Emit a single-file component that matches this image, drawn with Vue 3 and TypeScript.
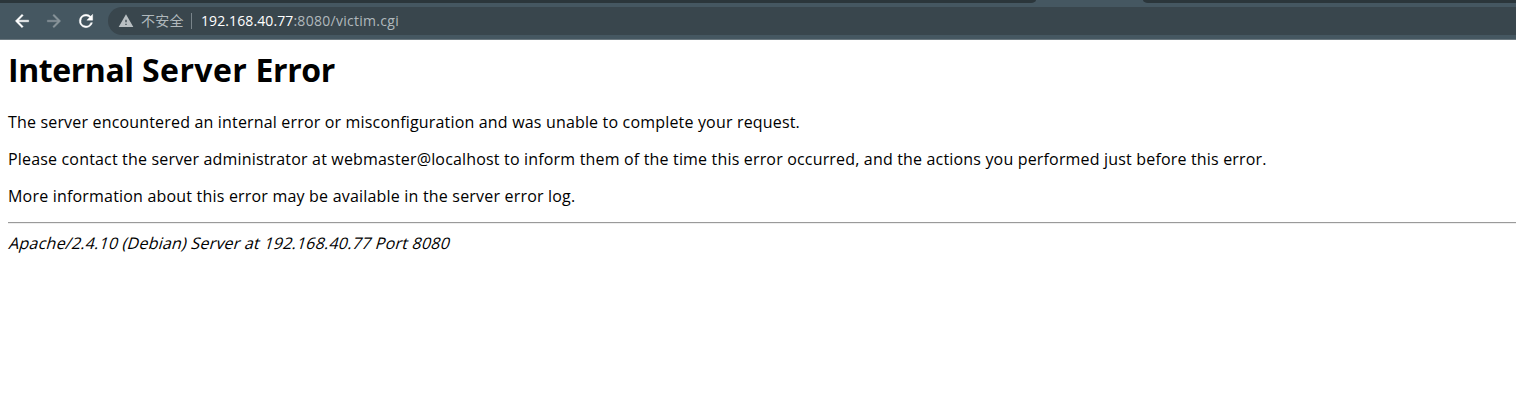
<script setup lang="ts">
const host = '192.168.40.77'
const path = ':8080/victim.cgi'
const messages: { text: string; name: string }[] = [
  { text: 'The server encountered an internal error or misconfiguration and was unable to complete your request.', name: 'summary' },
  { text: 'Please contact the server administrator at webmaster@localhost to inform them of the time this error occurred, and the actions you performed just before this error.', name: 'contact' },
  { text: 'More information about this error may be available in the server error log.', name: 'more' },
]
</script>

<template>
  <div class="window">
    <header class="chrome">
      <div class="tabs">
        <div class="tabs-left"></div>
        <div class="tab-active"></div>
        <div class="tabs-right"></div>
      </div>
      <div class="toolbar">
        <svg class="icon back" viewBox="0 0 24 24"><path d="M20 11H7.83l5.59-5.59L12 4l-8 8 8 8 1.41-1.41L7.83 13H20v-2z" /></svg>
        <svg class="icon forward" viewBox="0 0 24 24"><path d="M4 13h12.17l-5.59 5.59L12 20l8-8-8-8-1.41 1.41L16.17 11H4v2z" /></svg>
        <svg class="icon reload" viewBox="0 0 24 24"><path d="M17.65 6.35A7.96 7.96 0 0 0 12 4a8 8 0 1 0 7.73 10h-2.08A6 6 0 1 1 12 6c1.66 0 3.14.69 4.22 1.78L13 11h7V4l-2.35 2.35z" /></svg>
        <div class="omnibox">
          <svg class="warning" viewBox="0 0 24 24"><path d="M1 21h22L12 2 1 21zm12-3h-2v-2h2v2zm0-4h-2v-4h2v4z" /></svg>
          <span class="security">不安全</span>
          <span class="divider"></span>
          <span class="url"><span class="host">{{ host }}</span><span class="path">{{ path }}</span></span>
        </div>
      </div>
    </header>
    <main class="page">
      <h1><span class="tight">Internal</span> <span class="loose">Server</span> <span class="tight">Error</span></h1>
      <p v-for="m in messages" :key="m.name" :class="m.name">{{ m.text }}</p>
      <hr />
      <address><span class="signature">Apache/2.4.10 (Debian) Server at 192.168.40.77 Port 8080</span></address>
    </main>
  </div>
</template>

<style>
body {
  margin: 0;
  background: #fff;
}
</style>

<style scoped>
.window {
  height: 401px;
  overflow: hidden;
  background: #fff;
  font-family: "Open Sans", "Noto Sans CJK SC", sans-serif;
}
.chrome {
  height: 40px;
  box-sizing: border-box;
  background: #455761;
  border-bottom: 1px solid #6c7980;
}
.tabs {
  display: flex;
  height: 3px;
}
.tabs-left {
  width: 1036px;
  background: #2b363b;
  border-bottom-right-radius: 5px 3px;
}
.tab-active {
  width: 107px;
}
.tabs-right {
  flex: 1;
  background: #2b363b;
  border-bottom-left-radius: 5px 3px;
}
.toolbar {
  display: flex;
  align-items: center;
  height: 36px;
  padding-left: 12px;
}
.icon {
  width: 20px;
  height: 20px;
  margin-right: 12px;
  flex: none;
  fill: #fff;
  stroke: #fff;
  stroke-width: 0.5;
}
.forward {
  fill: #89949a;
  stroke: #89949a;
}
.omnibox {
  display: flex;
  align-items: center;
  flex: 1;
  height: 28px;
  box-sizing: border-box;
  padding-left: 10px;
  border-radius: 14px 0 0 14px;
  background: #39464d;
  color: #b0b8bc;
  font-size: 14px;
  line-height: 20px;
  white-space: nowrap;
}
.warning {
  width: 16px;
  height: 16px;
  margin-right: 7px;
  fill: #b9bfc2;
}
.security {
  width: 43px;
  font-family: "Noto Sans CJK SC", sans-serif;
  letter-spacing: 0.3px;
  position: relative;
  top: -1px;
}
.divider {
  width: 1px;
  height: 16px;
  margin: 0 9px 0 7px;
  background: #79848a;
}
.host {
  color: #fff;
  letter-spacing: 0.1px;
}
.path {
  letter-spacing: 0.28px;
}
.page {
  padding-left: 8px;
  color: #000;
  font-size: 16px;
  line-height: 21px;
  white-space: nowrap;
  letter-spacing: 0.173px;
}
h1 {
  margin: 8px 0 21px;
  font-size: 32px;
  line-height: 43px;
  letter-spacing: 0;
}
.tight {
  letter-spacing: -0.42px;
}
.loose {
  letter-spacing: 0.42px;
}
p {
  margin: 0 0 16px;
}
.more {
  letter-spacing: 0.195px;
}
hr {
  height: 1px;
  margin: -1px 0 9px;
  border: 0;
  border-top: 1px solid #9a9a9a;
  background: #eee;
}
address {
  font-style: normal;
  letter-spacing: 0.225px;
}
.signature {
  display: inline-block;
  transform: skewX(-16deg);
  transform-origin: 0 16px;
}
</style>
